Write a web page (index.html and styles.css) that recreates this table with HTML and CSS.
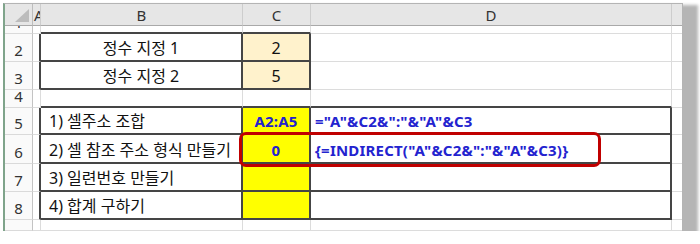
FILE: index.html
```html
<!DOCTYPE html>
<html lang="ko">
<head>
<meta charset="utf-8">
<title>Sheet</title>
<link rel="stylesheet" href="styles.css">
</head>
<body>
<div class="sheet">
  <div class="grid">
    <div class="hd corner"><span class="tri"></span></div>
    <div class="hd ha">A</div>
    <div class="hd">B</div>
    <div class="hd">C</div>
    <div class="hd">D</div>
    <div class="hd he"></div>

    <div class="rn">1</div>
    <div class="c"></div>
    <div class="c bb"></div>
    <div class="c bb"></div>
    <div class="c"></div>
    <div class="c e"></div>

    <div class="rn">2</div>
    <div class="c br"></div>
    <div class="c br bb center">정수 지정 1</div>
    <div class="c br bb center peach">2</div>
    <div class="c"></div>
    <div class="c e"></div>

    <div class="rn">3</div>
    <div class="c br"></div>
    <div class="c br bb center">정수 지정 2</div>
    <div class="c br bb center peach">5</div>
    <div class="c"></div>
    <div class="c e"></div>

    <div class="rn">4</div>
    <div class="c"></div>
    <div class="c bb"></div>
    <div class="c bb"></div>
    <div class="c bb"></div>
    <div class="c e"></div>

    <div class="rn">5</div>
    <div class="c br"></div>
    <div class="c br bb txt">1) 셀주소 조합</div>
    <div class="c br bb center yellow blue">A2:A5</div>
    <div class="c br bb blue f">="A"&amp;C2&amp;":"&amp;"A"&amp;C3</div>
    <div class="c e"></div>

    <div class="rn">6</div>
    <div class="c br"></div>
    <div class="c br bb txt">2) 셀 참조 주소 형식 만들기</div>
    <div class="c br bb center yellow blue">0</div>
    <div class="c br bb blue f">{=INDIRECT("A"&amp;C2&amp;":"&amp;"A"&amp;C3)}</div>
    <div class="c e"></div>

    <div class="rn">7</div>
    <div class="c br"></div>
    <div class="c br bb txt">3) 일련번호 만들기</div>
    <div class="c br bb yellow"></div>
    <div class="c br bb"></div>
    <div class="c e"></div>

    <div class="rn">8</div>
    <div class="c br"></div>
    <div class="c br bb txt">4) 합계 구하기</div>
    <div class="c br bb yellow"></div>
    <div class="c br bb"></div>
    <div class="c e"></div>

    <div class="rn"></div>
    <div class="c"></div>
    <div class="c"></div>
    <div class="c"></div>
    <div class="c"></div>
    <div class="c e"></div>
  </div>
  <div class="mark"></div>
</div>
</body>
</html>
```

FILE: styles.css
```css
html, body {
  margin: 0;
  padding: 0;
  background: #ffffff;
}

body {
  font-family: "Noto Sans", "Noto Sans CJK KR", sans-serif;
  color: #222;
}

.sheet {
  position: relative;
  margin: 3px 0 0 3px;
  width: 677px;
  background: #fff;
  border-left: 2px solid #7fa48b;
  border-top: 1px solid #b4b4b4;
  border-right: 1px solid #b4b4b4;
  box-shadow: 10px 7px 3px 5px #b5b5b5;
}

.grid {
  display: grid;
  grid-template-columns: 28px 8px 202px 68px 361px 10px;
  grid-template-rows: 22px 8px 28px 28px 18px 27px 29px 28px 28px 11px;
}

.grid > div {
  box-sizing: border-box;
  overflow: hidden;
  display: flex;
  align-items: flex-end;
  white-space: nowrap;
}

.hd {
  background: #e6e6e6;
  border-right: 1px solid #cdcdcd;
  border-bottom: 1px solid #a9a9a9;
  justify-content: center;
  font-size: 15px;
  line-height: 20px;
  color: #333;
}

.grid > .hd {
  align-items: center;
}

.hd.ha {
  justify-content: flex-start;
  padding-left: 1px;
}

.hd.he {
  border-right: none;
}

.corner {
  position: relative;
  border-right: 1px solid #bdbdbd;
}

.tri {
  position: absolute;
  right: 3px;
  bottom: 3px;
  width: 0;
  height: 0;
  border-left: 14px solid transparent;
  border-bottom: 13px solid #bcbcbc;
}

.rn {
  background: #fafafa;
  border-right: 1px solid #c3c3c3;
  border-bottom: 1px solid #dadada;
  justify-content: center;
  font-size: 15px;
  line-height: 20px;
  padding-bottom: 1px;
  color: #333;
}

.c {
  border-right: 1px solid #dcdcdc;
  border-bottom: 1px solid #dcdcdc;
  font-size: 16px;
  line-height: 20px;
  padding-bottom: 2px;
  color: #111;
}

.c.e {
  border-right: none;
}

.c.br {
  border-right: 2px solid #454545;
}

.c.bb {
  border-bottom: 2px solid #454545;
}

.center {
  justify-content: center;
}

.txt {
  padding-left: 8px;
}

.f {
  padding-left: 4px;
}

.peach {
  background: #fff2cc;
}

.yellow {
  background: #ffff00;
}

.blue {
  color: #2323cf;
  font-weight: 700;
  font-size: 15px;
  letter-spacing: 0.2px;
}

.mark {
  position: absolute;
  left: 234px;
  top: 128px;
  width: 362px;
  height: 35px;
  box-sizing: border-box;
  border: 3px solid #c00000;
  border-radius: 7px;
}
```
